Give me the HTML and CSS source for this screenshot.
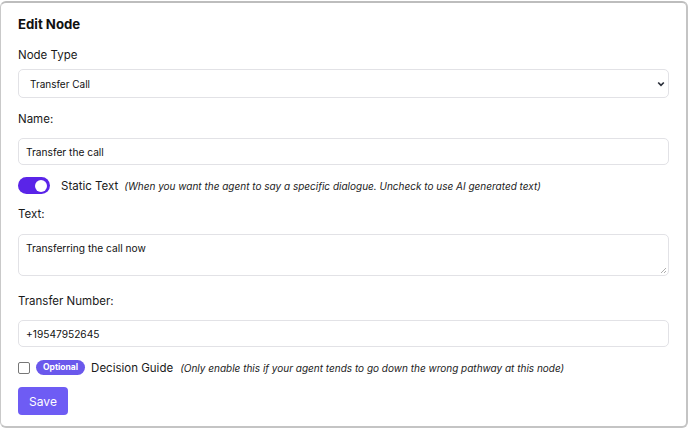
FILE: index.html
```html
<!DOCTYPE html>
<html>
<head>
<meta charset="utf-8">
<link rel="stylesheet" href="styles.css">
</head>
<body>
<div class="card">
  <h2 class="title">Edit Node</h2>
  <label class="label label-first">Node Type</label>
  <div class="select">
    <span>Transfer Call</span>
    <svg class="chev" width="8" height="6" viewBox="0 0 8 6"><path d="M1.2 1.5 L4 4.3 L6.8 1.5" fill="none" stroke="#2a2f3a" stroke-width="1.7"/></svg>
  </div>
  <label class="label label-name">Name:</label>
  <div class="input">Transfer the call</div>
  <div class="toggle-row">
    <span class="toggle"><span class="knob"></span></span>
    <span class="row-label">Static Text</span>
    <span class="hint">(When you want the agent to say a specific dialogue. Uncheck to use AI generated text)</span>
  </div>
  <label class="label label-text">Text:</label>
  <div class="textarea">Transferring the call now
    <svg class="grip" width="7" height="7" viewBox="0 0 7 7"><path d="M6 1 L1 6 M6 4 L4 6" stroke="#999" stroke-width="0.8"/></svg>
  </div>
  <label class="label label-num">Transfer Number:</label>
  <div class="input">+19547952645</div>
  <div class="check-row">
    <span class="checkbox"></span>
    <span class="badge">Optional</span>
    <span class="row-label">Decision Guide</span>
    <span class="hint hint2">(Only enable this if your agent tends to go down the wrong pathway at this node)</span>
  </div>
  <button class="save">Save</button>
</div>
</body>
</html>
```
FILE: styles.css
```css
html, body {
  margin: 0;
  padding: 0;
  background: #ffffff;
}
body {
  font-family: Inter, "Noto Sans", sans-serif;
  color: #111;
}
.card {
  box-sizing: border-box;
  width: 688px;
  height: 427px;
  margin: 1px 0 0 0;
  border: 1px solid #c9c9c9;
  border-top: 2px solid #bdbdbd;
  border-right: 2px solid #c4c4c4;
  border-bottom: 2px solid #c4c4c4;
  border-radius: 6px;
  padding: 11px 17px 0 17px;
  display: flex;
  flex-direction: column;
  align-items: stretch;
}
.title {
  margin: 0;
  font-size: 13.2px;
  line-height: 20px;
  font-weight: 700;
  color: #111;
}
.label {
  display: block;
  font-size: 11.5px;
  line-height: 18px;
  color: #1a1a1a;
}
.label-first { margin-top: 12px; margin-bottom: 5px; }
.label-name { margin-top: 12px; margin-bottom: 10px; }
.label-text { margin-top: 11px; margin-bottom: 11px; }
.label-num { margin-top: 16px; margin-bottom: 10px; }
.select, .input, .textarea {
  box-sizing: border-box;
  border: 1px solid #e2e2e6;
  border-radius: 5px;
  font-size: 10.2px;
  color: #111;
  background: #fff;
}
.select {
  height: 29px;
  display: flex;
  align-items: center;
  justify-content: space-between;
  padding: 0 3px 0 11px;
  font-size: 10px;
}
.input {
  height: 27px;
  display: flex;
  align-items: center;
  padding: 0 7px;
}
.textarea {
  position: relative;
  height: 42px;
  padding: 6px 7px;
  line-height: 14px;
}
.grip {
  position: absolute;
  right: 1px;
  bottom: 1px;
}
.toggle-row {
  margin-top: 12px;
  display: flex;
  align-items: center;
  height: 17px;
}
.toggle {
  width: 32px;
  height: 17px;
  border-radius: 9px;
  background: #5a24e8;
  position: relative;
  flex: none;
}
.knob {
  position: absolute;
  right: 3px;
  top: 2.5px;
  width: 12px;
  height: 12px;
  border-radius: 50%;
  background: #fff;
}
.row-label {
  font-size: 11.5px;
  color: #1a1a1a;
  margin-left: 11px;
}
.hint {
  font-size: 10px;
  font-style: italic;
  color: #222;
  margin-left: 6px;
}
.hint2 { margin-left: 7px; }
.check-row {
  margin-top: 13px;
  display: flex;
  align-items: center;
  height: 15px;
}
.checkbox {
  box-sizing: border-box;
  width: 12px;
  height: 12px;
  border: 1px solid #777;
  border-radius: 2px;
  flex: none;
}
.badge {
  margin-left: 6px;
  background: #6a58ec;
  color: #fff;
  font-size: 8.5px;
  font-weight: 700;
  border-radius: 8px;
  padding: 0 7px;
  height: 15px;
  line-height: 15px;
}
.check-row .row-label { margin-left: 6px; }
.save {
  margin-top: 12px;
  align-self: flex-start;
  width: 50px;
  height: 28px;
  border: none;
  border-radius: 4px;
  background: #6e5cf4;
  color: #fff;
  font-family: Inter, "Noto Sans", sans-serif;
  font-size: 12px;
  padding: 0;
}
```
